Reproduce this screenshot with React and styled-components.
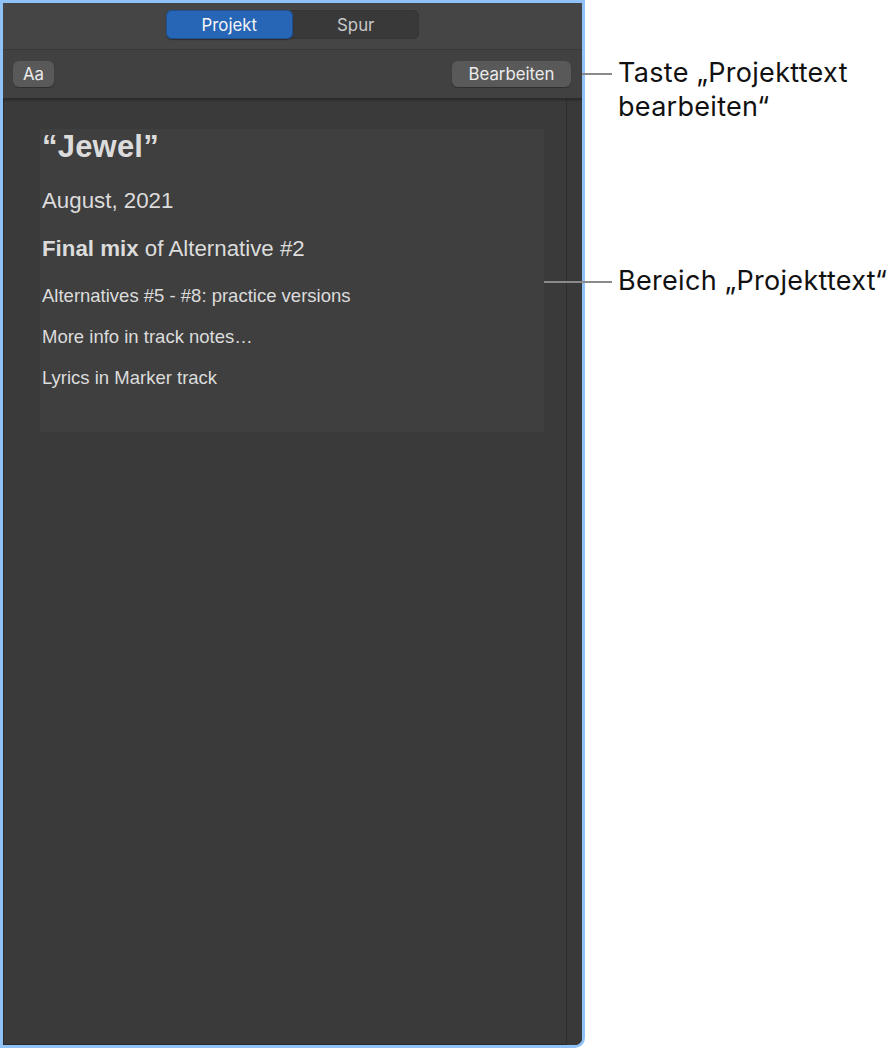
import React from "react";
import styled, { createGlobalStyle } from "styled-components";

const GlobalStyle = createGlobalStyle`
  html, body {
    margin: 0;
    padding: 0;
    background: #ffffff;
  }
  body {
    font-family: "Liberation Sans", Arial, sans-serif;
  }
`;

const Page = styled.div`
  position: relative;
  width: 896px;
  height: 1051px;
  overflow: hidden;
`;

const Panel = styled.div`
  width: 579px;
  height: 1042px;
  border: 3px solid #8fc3f7;
  border-bottom-right-radius: 10px;
  background: #3a3a3a;
  display: flex;
  flex-direction: column;
  overflow: hidden;
  box-shadow: inset 0 0 0 1px #2a2a2a;
`;

const TopBar = styled.div`
  height: 47px;
  background: #454545;
  border-bottom: 1px solid #3a3a3a;
  display: flex;
  justify-content: center;
  align-items: flex-start;
  padding-top: 7px;
  box-sizing: border-box;
  flex: none;
`;

const Segmented = styled.div`
  display: flex;
  width: 253px;
  height: 29px;
  border-radius: 6px;
  background: #393939;
  box-shadow: inset 0 0 0 1px #353535;
`;

const Segment = styled.div`
  flex: 1;
  display: flex;
  align-items: center;
  justify-content: center;
  border-radius: 6px;
  font-family: Inter, "Noto Sans", sans-serif;
  font-size: 16.8px;
  color: ${(p) => (p.$active ? "#f4f4f4" : "#c8c8c8")};
  background: ${(p) => (p.$active ? "#2766b7" : "transparent")};
  box-shadow: ${(p) => (p.$active ? "inset 0 0 0 1px #1f4f8e, 0 1px 1px rgba(0,0,0,0.35)" : "none")};
`;

const Toolbar = styled.div`
  height: 49px;
  background: #414141;
  border-bottom: 1px solid #2b2b2b;
  box-shadow: 0 1px 2px rgba(0, 0, 0, 0.35);
  display: flex;
  justify-content: space-between;
  align-items: center;
  padding: 0 11px 0 10px;
  box-sizing: border-box;
  flex: none;
  position: relative;
  z-index: 1;
`;

const ToolButton = styled.div`
  height: 26px;
  width: ${(p) => p.$w}px;
  border-radius: 6px;
  background: #595959;
  box-shadow: 0 1px 1px rgba(0, 0, 0, 0.3);
  color: #ececec;
  font-family: Inter, "Noto Sans", sans-serif;
  font-size: 16.8px;
  display: flex;
  align-items: center;
  justify-content: center;
`;

const Body = styled.div`
  flex: 1;
  display: flex;
`;

const Content = styled.div`
  flex: 1;
  padding: 30px 22px 0 37px;
`;

const Scrollbar = styled.div`
  width: 15px;
  flex: none;
  background: #393939;
  border-left: 1px solid #2e2e2e;
`;

const NoteBox = styled.div`
  background: #3f3f3f;
  padding: 0 0 43px 2px;
  color: #dcdcdc;
`;

const Title = styled.div`
  font-size: 31px;
  line-height: 36px;
  font-weight: 700;
  letter-spacing: 0.2px;
`;

const Line = styled.div`
  font-size: ${(p) => p.$size}px;
  line-height: ${(p) => p.$lh}px;
  margin-top: ${(p) => p.$mt}px;
  b {
    font-weight: 700;
  }
`;

const Callout = styled.div`
  position: absolute;
  left: ${(p) => p.$x}px;
  top: ${(p) => p.$y}px;
  display: flex;
  align-items: flex-start;
`;

const Leader = styled.div`
  width: ${(p) => p.$w}px;
  height: 2px;
  background: #8a8a8a;
  margin-top: ${(p) => p.$mt}px;
  margin-right: 6px;
`;

const CalloutText = styled.div`
  font-family: Inter, "Noto Sans", sans-serif;
  font-size: 27px;
  line-height: 34px;
  color: #111111;
  white-space: pre;
  letter-spacing: 0.3px;
`;

export default function App() {
  return (
    <>
      <GlobalStyle />
      <Page>
        <Panel>
          <TopBar>
            <Segmented>
              <Segment $active>Projekt</Segment>
              <Segment>Spur</Segment>
            </Segmented>
          </TopBar>
          <Toolbar>
            <ToolButton $w={41}>Aa</ToolButton>
            <ToolButton $w={119}>Bearbeiten</ToolButton>
          </Toolbar>
          <Body>
            <Content>
              <NoteBox>
                <Title>“Jewel”</Title>
                <Line $size={22.3} $lh={26} $mt={23}>August, 2021</Line>
                <Line $size={22.3} $lh={26} $mt={22}>
                  <b>Final mix</b> of Alternative #2
                </Line>
                <Line $size={18.5} $lh={22} $mt={23}>Alternatives #5 - #8: practice versions</Line>
                <Line $size={18.5} $lh={22} $mt={19}>More info in track notes…</Line>
                <Line $size={18.5} $lh={22} $mt={19}>Lyrics in Marker track</Line>
              </NoteBox>
            </Content>
            <Scrollbar />
          </Body>
        </Panel>
        <Callout $x={572} $y={56}>
          <Leader $w={40} $mt={17} />
          <CalloutText>{"Taste „Projekttext\nbearbeiten“"}</CalloutText>
        </Callout>
        <Callout $x={544} $y={264}>
          <Leader $w={68} $mt={17} />
          <CalloutText>Bereich „Projekttext“</CalloutText>
        </Callout>
      </Page>
    </>
  );
}
